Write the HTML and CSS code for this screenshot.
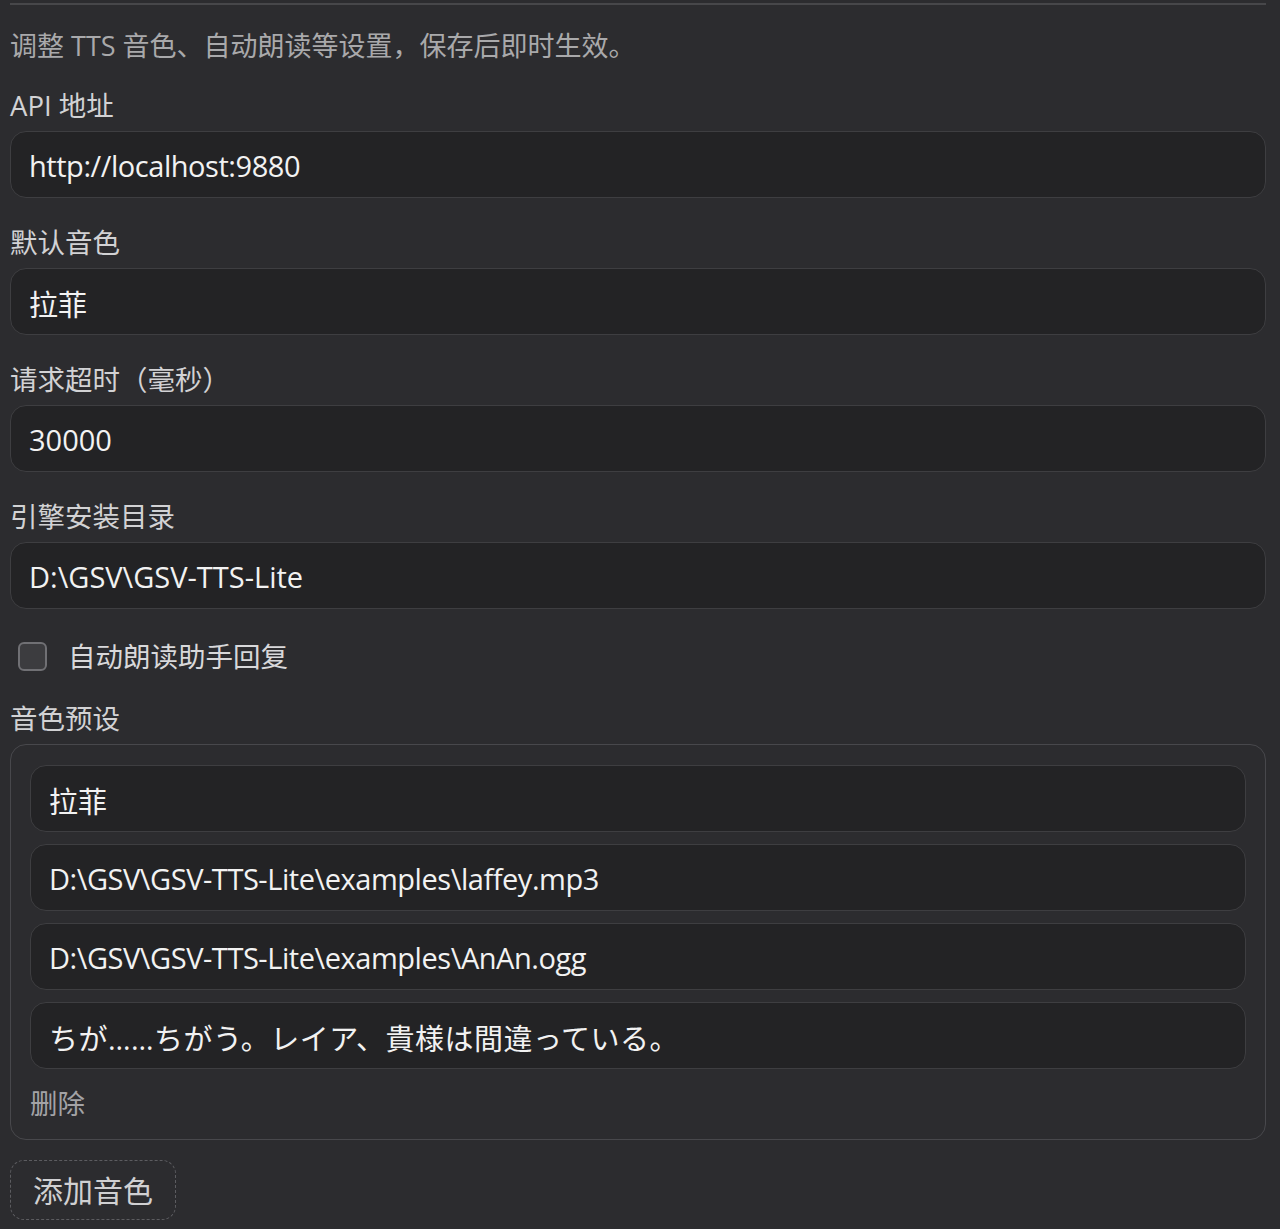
FILE: index.html
```html
<!DOCTYPE html>
<html lang="zh-CN">
<head>
<meta charset="utf-8">
<title>TTS 设置</title>
<link rel="stylesheet" href="styles.css">
</head>
<body>
<div class="panel">
  <div class="divider"></div>
  <p class="desc">调整 TTS 音色、自动朗读等设置，保存后即时生效。</p>

  <div class="field">
    <div class="label">API 地址</div>
    <input class="input tight" type="text" value="http://localhost:9880">
  </div>

  <div class="field">
    <div class="label">默认音色</div>
    <input class="input" type="text" value="拉菲">
  </div>

  <div class="field">
    <div class="label">请求超时（毫秒）</div>
    <input class="input" type="text" value="30000">
  </div>

  <div class="field">
    <div class="label">引擎安装目录</div>
    <input class="input" type="text" value="D:\GSV\GSV-TTS-Lite">
  </div>

  <label class="check-row">
    <span class="checkbox"></span>
    <span class="check-text">自动朗读助手回复</span>
  </label>

  <div class="label">音色预设</div>
  <div class="preset-box">
    <div class="preset-list">
      <input class="input" type="text" value="拉菲">
      <input class="input tight" type="text" value="D:\GSV\GSV-TTS-Lite\examples\laffey.mp3">
      <input class="input tight" type="text" value="D:\GSV\GSV-TTS-Lite\examples\AnAn.ogg">
      <input class="input wide" type="text" value="ちが……ちがう。レイア、貴様は間違っている。">
    </div>
    <button class="delete" type="button">删除</button>
  </div>

  <button class="add" type="button">添加音色</button>
</div>
</body>
</html>
```

FILE: styles.css
```css
html, body {
  margin: 0;
  padding: 0;
  background: #2c2c2f;
}

body {
  font-family: "Open Sans", "Noto Sans CJK SC", sans-serif;
  color: #d6d6d6;
}

.panel {
  padding: 3px 14px 20px 10px;
  display: flex;
  flex-direction: column;
  align-items: stretch;
}

.divider {
  height: 2px;
  background: #47474a;
}

.desc {
  margin: 23px 0 24px;
  font-size: 27px;
  line-height: 36px;
  color: #a9a9ab;
}

.field {
  display: flex;
  flex-direction: column;
  margin-bottom: 27px;
}

.label {
  font-size: 27.5px;
  line-height: 36px;
  height: 36px;
  color: #d2d2d4;
  margin-bottom: 7px;
}

.input {
  box-sizing: border-box;
  display: block;
  width: 100%;
  height: 67px;
  margin: 0;
  padding: 2px 19px 0 18px;
  border: 1px solid #3e3e41;
  border-radius: 16px;
  background: #232325;
  color: #f2f2f2;
  font-family: "Open Sans", "Noto Sans CJK SC", sans-serif;
  font-size: 29px;
  outline: none;
}

.input.tight {
  letter-spacing: -0.45px;
}

.input.wide {
  letter-spacing: 0.5px;
}

.check-row {
  display: flex;
  align-items: center;
  height: 41px;
  margin-bottom: 24px;
  padding-left: 8px;
  gap: 21px;
}

.checkbox {
  box-sizing: border-box;
  width: 29px;
  height: 29px;
  border: 2px solid #707074;
  border-radius: 6px;
  background: #3c3c3f;
}

.check-text {
  font-size: 27.5px;
  line-height: 36px;
  color: #d8d8da;
}

.preset-box {
  border: 1px solid #48484c;
  border-radius: 16px;
  padding: 20px 19px 17px;
  display: flex;
  flex-direction: column;
  align-items: flex-start;
}

.preset-list {
  display: flex;
  flex-direction: column;
  gap: 12px;
  width: 100%;
}

.delete {
  margin: 17px 0 0;
  padding: 0;
  border: none;
  background: none;
  font-family: "Open Sans", "Noto Sans CJK SC", sans-serif;
  font-size: 27.5px;
  line-height: 36px;
  color: #a3a3a6;
  cursor: pointer;
}

.add {
  align-self: flex-start;
  box-sizing: border-box;
  margin-top: 20px;
  height: 60px;
  padding: 2px 22px 0;
  border: 1.5px dashed #5c5c60;
  border-radius: 14px;
  background: none;
  font-family: "Open Sans", "Noto Sans CJK SC", sans-serif;
  font-size: 30px;
  line-height: 40px;
  color: #d0d0d2;
  cursor: pointer;
}
```
